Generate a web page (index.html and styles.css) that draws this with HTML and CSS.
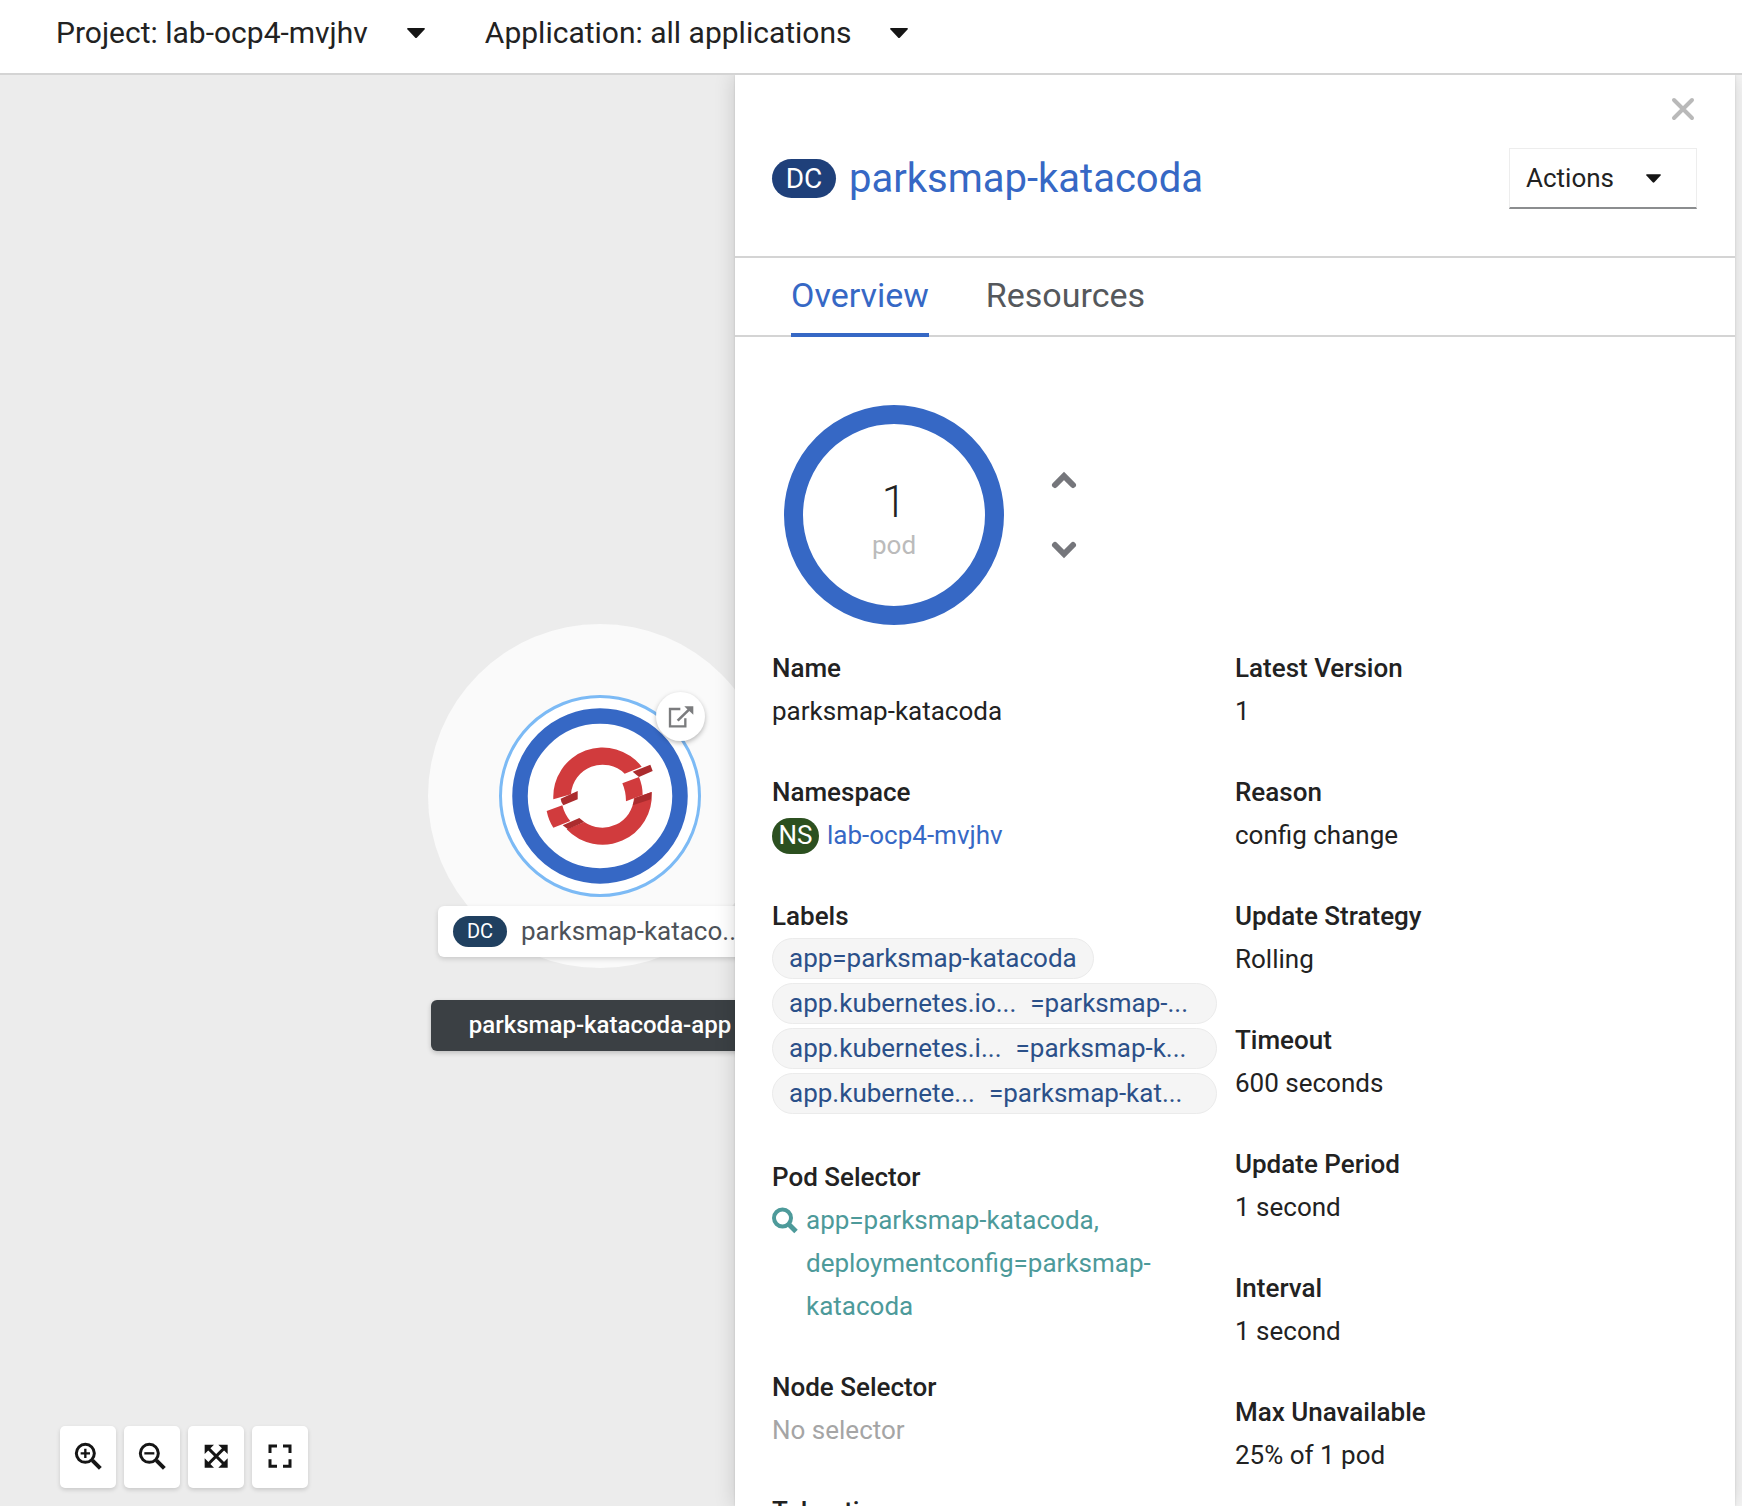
FILE: index.html
```html
<!DOCTYPE html>
<html lang="en">
<head>
<meta charset="utf-8">
<meta name="viewport" content="width=device-width, initial-scale=1">
<title>parksmap-katacoda · Topology</title>
<link rel="stylesheet" href="styles.css">
</head>
<body>
<header class="toolbar">
  <button class="picker" type="button">Project: lab-ocp4-mvjhv
    <svg class="caret" viewBox="0 0 18 10" aria-hidden="true"><path d="M1 0h16q1.500 0 .5 1.500L10 9.500q-1 1-2 0L.5 1.500Q-.5 0 1 0z"/></svg>
  </button>
  <button class="picker" type="button">Application: all applications
    <svg class="caret" viewBox="0 0 18 10" aria-hidden="true"><path d="M1 0h16q1.500 0 .5 1.500L10 9.500q-1 1-2 0L.5 1.500Q-.5 0 1 0z"/></svg>
  </button>
</header>

<main class="workspace">
  <section class="canvas" aria-label="Topology">
    <div class="group-area"></div>
    <svg class="node" viewBox="0 0 202 202" role="img" aria-label="parksmap-katacoda">
      <circle cx="101" cy="101" r="99.500" fill="#fff" stroke="#7cbaf5" stroke-width="3"/>
      <circle cx="101" cy="101" r="80" fill="none" stroke="#3668c5" stroke-width="15.500"/>
      <g transform="translate(41 45) scale(.33333)">
        <path fill="#d13b3d" d="M40 178A148 148 0 0 1 305 80L254 101A95 95 0 0 0 93 163z"/>
        <path fill="#d13b3d" d="M335 156A148 148 0 0 1 80 268L133 246A95 95 0 0 0 282 175z"/>
        <path fill="#d13b3d" d="M247 130L297 111Q308 137 308 165L258 184Q258 155 247 130z"/>
        <path fill="#d13b3d" d="M20 213L67 196Q74 224 91 243L40 263Q26 242 20 213z"/>
        <path fill="#ab2c2e" d="M278 95L331 74L338 93L297 111z"/>
        <path fill="#ab2c2e" d="M62 176L113 153V178L70 196Q63 188 62 176z"/>
        <path fill="#ab2c2e" d="M285 174L335 156L333 178L278 196z"/>
        <path fill="#ab2c2e" d="M68 256L118 234L133 246L84 268z"/>
      </g>
    </svg>
    <a class="open-url" href="#" aria-label="Open URL">
      <svg viewBox="17 19 147 147" aria-hidden="true" fill="none" stroke="#7b7c7e">
        <path stroke-width="7" d="M90 70H59V122H105V98"/>
        <path stroke-width="8" d="M82 105L116 72"/>
        <path fill="#7b7c7e" stroke="none" d="M102 62H129V87L121 80L110 70z"/>
      </svg>
    </a>
    <div class="node-label"><span class="kind kind-small">DC</span><span>parksmap-kataco...</span></div>
    <div class="group-label">parksmap-katacoda-app</div>
    <div class="zoom-bar">
      <button class="zoom-button" type="button" aria-label="Zoom in">
        <svg viewBox="0 0 168 186" fill="none" stroke="#151515"><circle cx="76" cy="82" r="27" stroke-width="9"/><path stroke-width="12" d="M97 103L121 127"/><path stroke-width="7" d="M62 82H90M76 68V96"/></svg>
      </button>
      <button class="zoom-button" type="button" aria-label="Zoom out">
        <svg viewBox="0 0 168 186" fill="none" stroke="#151515"><circle cx="76" cy="82" r="27" stroke-width="9"/><path stroke-width="12" d="M97 103L121 127"/><path stroke-width="7" d="M61 82H91"/></svg>
      </button>
      <button class="zoom-button" type="button" aria-label="Fit to screen">
        <svg viewBox="0 0 168 186"><path fill="#151515" d="M50 56H78L50 84zM119 56V84L91 56zM50 125V97L78 125zM119 125H91L119 97z"/><path fill="none" stroke="#151515" stroke-width="9" d="M58 64L111 117M111 64L58 117"/></svg>
      </button>
      <button class="zoom-button" type="button" aria-label="Reset view">
        <svg viewBox="0 0 168 186" fill="none" stroke="#151515" stroke-width="9"><path d="M54 81V60H75M93 60H114V81M114 100V121H93M75 121H54V100"/></svg>
      </button>
    </div>
  </section>

  <aside class="panel">
    <div class="panel-head">
      <button class="close" type="button" aria-label="Close">
        <svg viewBox="0 0 28 28" aria-hidden="true"><path d="M5 5L23 23M23 5L5 23" stroke="#b9b9b9" stroke-width="4" stroke-linecap="round"/></svg>
      </button>
      <div class="title-row">
        <h1 class="title"><span class="kind kind-large">DC</span><a href="#">parksmap-katacoda</a></h1>
        <button class="actions" type="button">Actions
          <svg class="caret caret-small" viewBox="0 0 18 10" aria-hidden="true"><path d="M1 0h16q1.500 0 .5 1.500L10 9.500q-1 1-2 0L.5 1.500Q-.5 0 1 0z"/></svg>
        </button>
      </div>
    </div>
    <nav class="tabs">
      <a class="tab tab-active" href="#">Overview</a>
      <a class="tab" href="#">Resources</a>
    </nav>
    <div class="panel-body">
      <div class="scaler">
        <div class="donut"><span class="donut-count">1</span><span class="donut-unit">pod</span></div>
        <div class="steppers">
          <button class="step" type="button" aria-label="Increase pod count"><svg viewBox="0 0 32 32"><path d="M7 21L16 12L25 21"/></svg></button>
          <button class="step" type="button" aria-label="Decrease pod count"><svg viewBox="0 0 32 32"><path d="M7 11L16 20L25 11"/></svg></button>
        </div>
      </div>
      <div class="details">
        <dl class="column">
          <div class="field"><dt>Name</dt><dd>parksmap-katacoda</dd></div>
          <div class="field"><dt>Namespace</dt><dd class="resource"><span class="kind kind-ns">NS</span><a href="#">lab-ocp4-mvjhv</a></dd></div>
          <div class="field"><dt>Labels</dt><dd class="pills">
            <a class="pill" href="#">app=parksmap-katacoda</a>
            <a class="pill pill-wide" href="#"><span>app.kubernetes.io...</span><span>=parksmap-...</span></a>
            <a class="pill pill-wide" href="#"><span>app.kubernetes.i...</span><span>=parksmap-k...</span></a>
            <a class="pill pill-wide" href="#"><span>app.kubernete...</span><span>=parksmap-kat...</span></a>
          </dd></div>
          <div class="field"><dt>Pod Selector</dt><dd><a class="selector" href="#">
            <svg class="search" viewBox="0 0 26 26" aria-hidden="true" fill="none" stroke="currentColor"><circle cx="10.500" cy="10.500" r="8.500" stroke-width="4"/><path stroke-width="5" d="M16.500 16.500L24 24"/></svg>
            <span>app=parksmap-katacoda, deploymentconfig=parksmap-katacoda</span></a></dd></div>
          <div class="field"><dt>Node Selector</dt><dd class="muted">No selector</dd></div>
          <div class="field"><dt>Tolerations</dt></div>
        </dl>
        <dl class="column">
          <div class="field"><dt>Latest Version</dt><dd>1</dd></div>
          <div class="field"><dt>Reason</dt><dd>config change</dd></div>
          <div class="field"><dt>Update Strategy</dt><dd>Rolling</dd></div>
          <div class="field"><dt>Timeout</dt><dd>600 seconds</dd></div>
          <div class="field"><dt>Update Period</dt><dd>1 second</dd></div>
          <div class="field"><dt>Interval</dt><dd>1 second</dd></div>
          <div class="field"><dt>Max Unavailable</dt><dd>25% of 1 pod</dd></div>
        </dl>
      </div>
    </div>
  </aside>
</main>
</body>
</html>
```
FILE: styles.css
```css
* { box-sizing: border-box; }

body {
  margin: 0;
  height: 100vh;
  display: flex;
  flex-direction: column;
  overflow: hidden;
  background: #fff;
  color: #222;
  font: 26px/43px Roboto, "Liberation Sans", sans-serif;
}

a { color: #3668c5; text-decoration: none; }
button { font: inherit; color: inherit; background: none; border: 0; padding: 0; cursor: pointer; }
svg { display: block; }
dl, dd, h1 { margin: 0; }

.toolbar {
  position: relative;
  z-index: 2;
  flex: none;
  display: flex;
  gap: 60px;
  padding: 0 56px 7px;
  background: #fff;
  border-bottom: 2px solid #d4d4d4;
}
.picker { display: flex; align-items: center; gap: 39px; font-size: 30px; line-height: 66px; white-space: nowrap; }
.caret { width: 18px; height: 10px; fill: #151515; }
.caret-small { width: 15px; height: 9px; }

.workspace { flex: 1; min-height: 0; display: grid; grid-template-columns: 735fr 1007fr; background: #f7f7f7; }

/* Topology canvas */
.canvas { position: relative; min-width: 0; overflow: hidden; background: #ececec; }
.group-area { position: absolute; left: 428px; top: 549px; width: 344px; height: 344px; border-radius: 50%; background: #fafafa; }
.node { position: absolute; left: 499px; top: 620px; width: 202px; height: 202px; }
.open-url {
  position: absolute; left: 656px; top: 617px; width: 49px; height: 49px;
  border-radius: 50%; background: #fff; box-shadow: 0 2px 5px rgba(0, 0, 0, .28);
}
.node-label {
  position: absolute; left: 438px; top: 831px; width: 324px; height: 51px;
  display: flex; align-items: center; gap: 14px; padding-left: 15px;
  border-radius: 6px; background: #fff; color: #4d5258;
  box-shadow: 0 2px 5px rgba(0, 0, 0, .15); white-space: nowrap;
}
.group-label {
  position: absolute; left: 431px; top: 925px; width: 338px; height: 51px;
  border-radius: 6px; background: #3b4044; color: #fff;
  font-size: 24px; font-weight: 500; line-height: 51px; text-align: center;
  box-shadow: 0 2px 5px rgba(0, 0, 0, .2);
}
.zoom-bar { position: absolute; left: 60px; bottom: 18px; display: flex; gap: 8px; }
.zoom-button { width: 56px; height: 62px; border-radius: 5px; background: #fff; box-shadow: 0 2px 4px rgba(0, 0, 0, .15); }
.zoom-button svg { width: 56px; height: 62px; }

/* Resource kind badges */
.kind { flex: none; display: flex; align-items: center; justify-content: center; border-radius: 20px; background: #1f407a; color: #fff; }
.kind-small { width: 54px; height: 31px; background: #204060; font-size: 20px; }
.kind-large { width: 64px; height: 39px; font-size: 28px; }
.kind-ns { width: 47px; height: 36px; background: #2c5020; }

/* Side panel */
.panel {
  position: relative; z-index: 1; min-width: 0; overflow: hidden;
  margin-right: 7px; background: #fff;
  box-shadow: 0 0 20px rgba(0, 0, 0, .16), 0 0 2px rgba(0, 0, 0, .12);
}
.panel-head { display: flex; flex-direction: column; gap: 25px; padding: 20px 38px 47px 37px; border-bottom: 2px solid #d4d4d4; }
.close { align-self: flex-end; width: 28px; height: 28px; }
.title-row { display: flex; align-items: center; justify-content: space-between; }
.title { display: flex; align-items: center; gap: 13px; font-size: 40px; font-weight: 400; line-height: 58px; }
.actions {
  display: flex; align-items: center; gap: 32px; height: 61px; padding: 0 35px 0 16px;
  border: 1px solid #ededed; border-bottom: 2px solid #8b8d8f;
}
.tabs { display: flex; gap: 57px; height: 79px; padding-left: 56px; border-bottom: 2px solid #d4d4d4; }
.tab { height: 79px; font-size: 34px; line-height: 75px; color: #55585c; }
.tab-active { color: #3668c5; border-bottom: 4px solid #3668c5; }

.panel-body { padding: 68px 37px 0 37px; }
.scaler { display: flex; align-items: center; gap: 44px; padding-left: 12px; }
.donut {
  display: flex; flex-direction: column; align-items: center; justify-content: center;
  width: 220px; height: 220px; border: 19px solid #3668c5; border-radius: 50%;
}
.donut-count { font-size: 44px; font-weight: 300; line-height: 60px; }
.donut-unit { font-size: 26px; line-height: 26px; color: #bbb; }
.steppers { display: flex; flex-direction: column; gap: 38px; }
.step { width: 32px; height: 32px; }
.step path { fill: none; stroke: #75767b; stroke-width: 6px; stroke-linecap: round; }

.details { display: grid; grid-template-columns: 1fr 1fr; padding-top: 22px; }
.column { min-width: 0; padding-right: 18px; }
.field { margin-bottom: 38px; }
dt { font-weight: 500; }
.resource { display: flex; align-items: center; gap: 8px; }
.pills { display: flex; flex-direction: column; align-items: flex-start; }
.pill {
  display: flex; max-width: 100%; height: 41px; margin-bottom: 4px; padding: 0 16px;
  border: 1px solid #ebebeb; border-radius: 21px; background: #f5f5f5;
  color: #2b5089; line-height: 39px; white-space: nowrap;
}
.pill-wide { width: 100%; gap: 14px; }
.selector { display: flex; gap: 8px; color: #4d9a9a; }
.search { flex: none; width: 26px; height: 43px; }
.muted { color: #a5a5a5; }
```
